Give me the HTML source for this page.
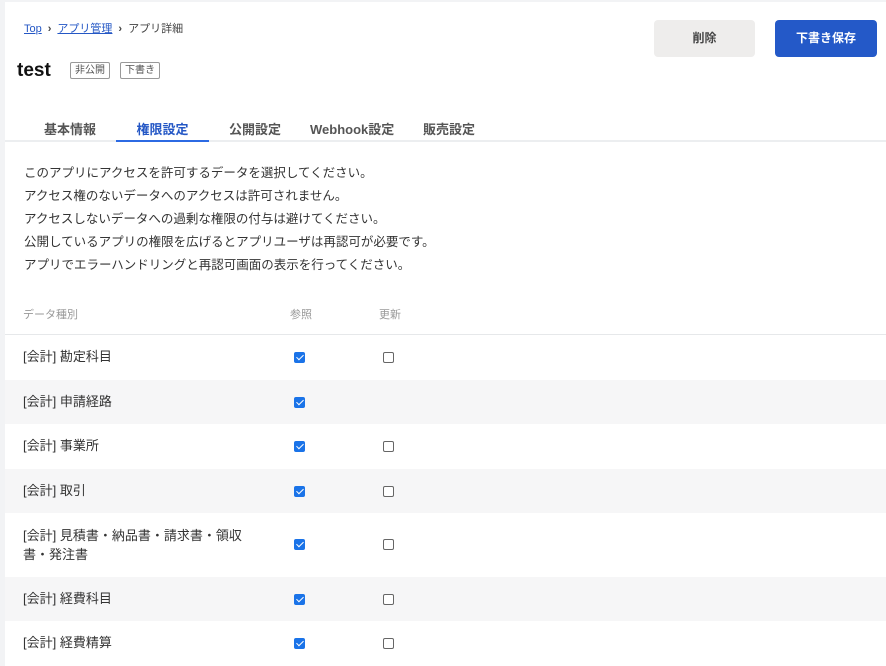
<!DOCTYPE html>
<html><head><meta charset="utf-8"><style>
*{margin:0;padding:0;box-sizing:border-box}
body{width:886px;height:666px;overflow:hidden;background:#f2f3f5;font-family:"Liberation Sans","Noto Sans CJK JP",sans-serif;color:#333}
.main{position:absolute;left:5px;top:2px;right:0;bottom:0;background:#fff}
.bc{position:absolute;left:19px;top:18px;font-size:11px;color:#444}
.bc a{color:#2457c5;text-decoration:underline}
.bc .sep{margin:0 6px;font-weight:bold}
h1{position:absolute;left:12px;top:58px;font-size:19px;font-weight:bold;color:#111}
.tag{position:absolute;top:60px;height:17px;width:40px;text-align:center;border:1px solid #999;border-radius:2px;font-size:10px;line-height:15px;color:#555}
.btn{position:absolute;top:18px;height:37px;border-radius:4px;font-size:12px;font-weight:bold;text-align:center;line-height:37px}
.tabs{position:absolute;left:0;right:0;top:117px;height:23px;border-bottom:2px solid #eceef0}
.tab{position:absolute;top:0;font-size:13px;font-weight:bold;color:#555}
.tab.on{color:#2457c5;border-bottom:2px solid #2c6ae3;height:23px}
.desc{position:absolute;left:19px;top:160px;font-size:12.5px;line-height:23px;color:#333}
.th{position:absolute;top:304px;font-size:11px;color:#999}
.hl{position:absolute;left:0;right:0;top:332px;border-top:1px solid #e6e8ea}
.row{position:absolute;left:0;right:0;font-size:13px;color:#333}
.row.g{background:#f6f6f7}
.row span{position:absolute;left:18px;line-height:19px}
.cb{position:absolute;width:11px;height:11px;border-radius:2px}
.cb.c{background:#1a73e8;left:289px}
.cb.c:after{content:"";position:absolute;left:3.5px;top:1px;width:3px;height:6px;border:solid #fff;border-width:0 1.6px 1.6px 0;transform:rotate(45deg)}
.cb.u{border:1px solid #666;left:378px;background:#fff}
</style></head><body><div class="main">
<div class="bc"><a>Top</a><span class="sep">›</span><a>アプリ管理</a><span class="sep">›</span>アプリ詳細</div>
<h1>test</h1>
<div class="tag" style="left:65px">非公開</div>
<div class="tag" style="left:115px">下書き</div>
<div class="btn" style="left:649px;width:101px;background:#eeedec;color:#444">削除</div>
<div class="btn" style="left:770px;width:102px;background:#2459c8;color:#fff">下書き保存</div>
<div class="tabs">
<div class="tab" style="left:39px">基本情報</div>
<div class="tab on" style="left:111px;width:93px;text-align:center">権限設定</div>
<div class="tab" style="left:224px">公開設定</div>
<div class="tab" style="left:305px">Webhook設定</div>
<div class="tab" style="left:418px">販売設定</div>
</div>
<div class="desc">このアプリにアクセスを許可するデータを選択してください。<br>アクセス権のないデータへのアクセスは許可されません。<br>アクセスしないデータへの過剰な権限の付与は避けてください。<br>公開しているアプリの権限を広げるとアプリユーザは再認可が必要です。<br>アプリでエラーハンドリングと再認可画面の表示を行ってください。</div>
<div class="th" style="left:18px">データ種別</div>
<div class="th" style="left:285px">参照</div>
<div class="th" style="left:374px">更新</div>
<div class="hl"></div>
<div class="row" style="top:333px;height:45px"><span style="top:12px">[会計] 勘定科目</span><i class="cb c" style="top:17px"></i><i class="cb u" style="top:17px"></i></div>
<div class="row g" style="top:378px;height:44px"><span style="top:12px">[会計] 申請経路</span><i class="cb c" style="top:17px"></i></div>
<div class="row" style="top:422px;height:45px"><span style="top:12px">[会計] 事業所</span><i class="cb c" style="top:17px"></i><i class="cb u" style="top:17px"></i></div>
<div class="row g" style="top:467px;height:44px"><span style="top:12px">[会計] 取引</span><i class="cb c" style="top:17px"></i><i class="cb u" style="top:17px"></i></div>
<div class="row" style="top:511px;height:64px"><span style="top:13px;width:230px">[会計] 見積書・納品書・請求書・領収書・発注書</span><i class="cb c" style="top:26px"></i><i class="cb u" style="top:26px"></i></div>
<div class="row g" style="top:575px;height:44px"><span style="top:12px">[会計] 経費科目</span><i class="cb c" style="top:17px"></i><i class="cb u" style="top:17px"></i></div>
<div class="row" style="top:619px;height:45px"><span style="top:12px">[会計] 経費精算</span><i class="cb c" style="top:17px"></i><i class="cb u" style="top:17px"></i></div>
</div></body></html>
